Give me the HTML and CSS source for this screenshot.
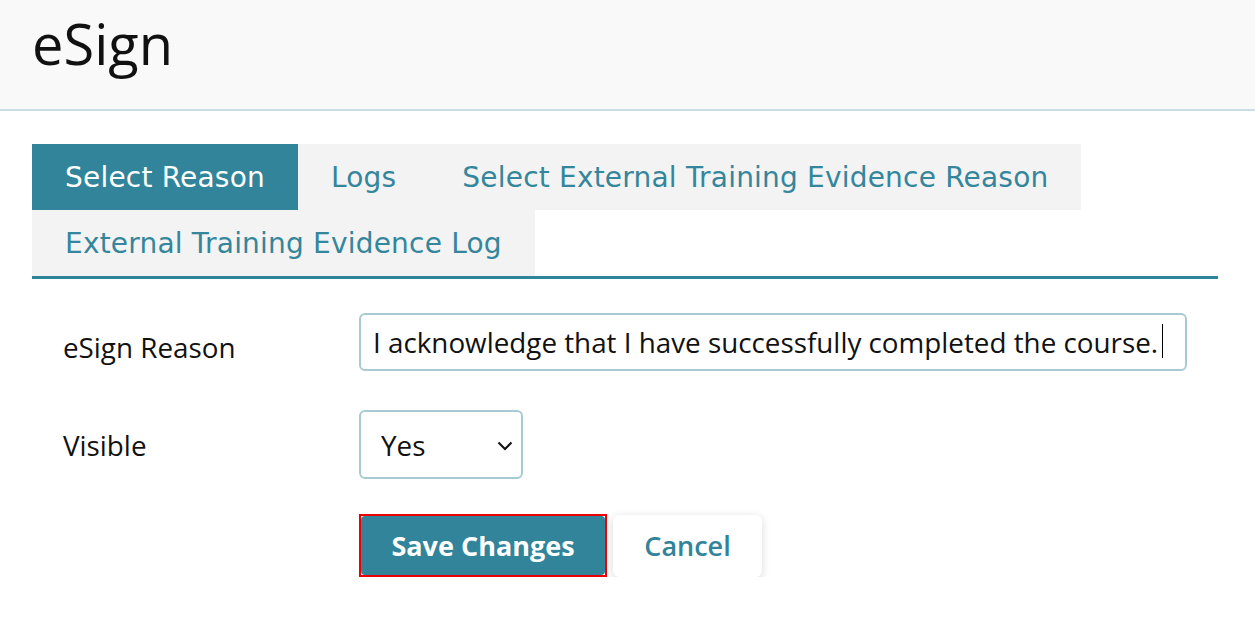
FILE: index.html
```html
<!DOCTYPE html>
<html lang="en">
<head>
<meta charset="utf-8">
<title>eSign</title>
<link rel="stylesheet" href="styles.css">
</head>
<body>
<header class="page-header">
  <h1 class="page-title">eSign</h1>
</header>
<main class="content">
  <nav class="tabs">
    <a class="tab active">Select Reason</a>
    <a class="tab">Logs</a>
    <a class="tab">Select External Training Evidence Reason</a>
    <a class="tab">External Training Evidence Log</a>
  </nav>
  <form class="form">
    <div class="form-row row-reason">
      <label class="label" for="reason">eSign Reason</label>
      <div class="control">
        <input id="reason" class="text-input" type="text" value="I acknowledge that I have successfully completed the course."><span class="caret"></span>
      </div>
    </div>
    <div class="form-row row-visible">
      <label class="label" for="visible">Visible</label>
      <div class="control">
        <div class="select-wrap">
          <select id="visible" class="select">
            <option>Yes</option>
            <option>No</option>
          </select>
          <svg class="chevron" width="16" height="10" viewBox="0 0 16 10"><path d="M1.5 1.5 L8 8 L14.5 1.5" fill="none" stroke="#111" stroke-width="2"/></svg>
        </div>
      </div>
    </div>
    <div class="form-row row-actions">
      <span></span>
      <div class="actions">
        <span class="focus-ring"><button type="button" class="btn btn-primary">Save Changes</button></span>
        <button type="button" class="btn btn-secondary">Cancel</button>
      </div>
    </div>
  </form>
</main>
</body>
</html>
```
FILE: styles.css
```css
* { box-sizing: border-box; }
html, body { margin: 0; padding: 0; background: #fff; }
body { font-family: "Open Sans", "Noto Sans", sans-serif; color: #111; }

.page-header {
  height: 111px;
  background: #f9f9f9;
  border-bottom: 2px solid #cadfe5;
  padding: 0 32px;
  display: flex;
  align-items: center;
}
.page-title {
  margin: 0;
  font-weight: 400;
  font-size: 56px;
  line-height: 1;
  color: #111;
  position: relative;
  top: -12px;
}

.content { padding: 33px 37px 0 32px; }

.tabs {
  display: flex;
  flex-wrap: wrap;
  border-bottom: 3px solid #2e8499;
}
.tab {
  display: flex;
  align-items: center;
  height: 66px;
  padding: 0 33px;
  background: #f3f3f3;
  color: #33869b;
  font-family: "DejaVu Sans", sans-serif;
  font-size: 28px;
  font-weight: 400;
  letter-spacing: 0.2px;
  white-space: nowrap;
  cursor: pointer;
}
.tab.active { background: #31849a; color: #fff; }

.form { padding: 34px 31px 0 31px; }
.form-row {
  display: grid;
  grid-template-columns: 296px 1fr;
  align-items: center;
}
.row-visible { margin-top: 39px; }
.row-actions { margin-top: 35px; }
.label { font-size: 27.8px; color: #111; }
.row-reason .label { position: relative; top: 5px; }

.control { position: relative; }
.text-input {
  width: 828px;
  height: 58px;
  border: 2px solid #a8cad4;
  border-radius: 6px;
  padding: 0 12px;
  font-family: "Open Sans", sans-serif;
  font-size: 27.8px;
  color: #111;
  background: #fff;
  outline: none;
}
.caret {
  position: absolute;
  left: 803px;
  top: 11px;
  width: 1px;
  height: 34px;
  background: #000;
}

.select-wrap { position: relative; width: 164px; height: 69px; }
.select {
  appearance: none;
  -webkit-appearance: none;
  width: 164px;
  height: 69px;
  border: 2px solid #a8cad4;
  border-radius: 6px;
  padding: 0 20px;
  font-family: "Open Sans", sans-serif;
  font-size: 27.8px;
  color: #111;
  background: #fff;
  outline: none;
}
.chevron { position: absolute; right: 10px; top: 31px; pointer-events: none; }

.actions { display: flex; align-items: center; gap: 6px; }
.focus-ring { display: inline-flex; border: 2px solid #ee0000; }
.btn {
  font-family: "Open Sans", sans-serif;
  font-size: 27px;
  font-weight: 700;
  border: none;
  cursor: pointer;
}
.btn-primary {
  width: 244px;
  height: 59px;
  background: #31849a;
  color: #fff;
  border-radius: 4px;
}
.btn-secondary {
  width: 149px;
  height: 62px;
  background: #fff;
  color: #31849a;
  border-radius: 6px;
  font-weight: 600;
  box-shadow: 0 2px 8px rgba(0,0,0,0.16);
}
```
